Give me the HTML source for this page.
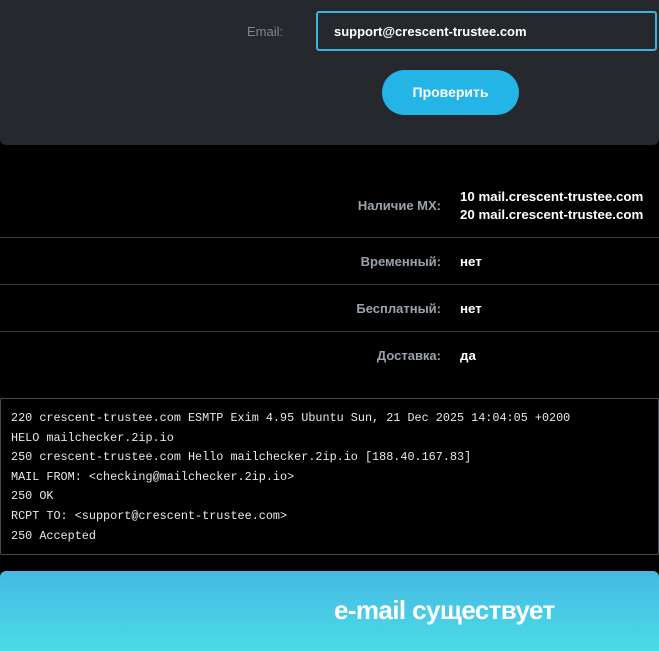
<!DOCTYPE html>
<html><head><meta charset="utf-8"><style>
*{margin:0;padding:0;box-sizing:border-box}
body{width:659px;height:646px;background:#000;font-family:"Liberation Sans","DejaVu Sans",sans-serif;position:relative;overflow:hidden;color:#fff}
.top{position:absolute;left:0;top:0;width:659px;height:145px;background:#25282d;border-radius:0 0 6px 6px}
.lbl{position:absolute;left:247px;top:24px;font-size:13px;color:#7d8794}
.inp{position:absolute;left:316px;top:11px;width:341px;height:40px;border:2px solid #3fb0df;border-radius:3px;background:#25282d;font-size:13px;font-weight:bold;padding:11px 0 0 16px}
.btn{position:absolute;left:382px;top:70px;width:137px;height:45px;border-radius:23px;background:#25b4e6;font-size:14px;font-weight:bold;text-align:center;line-height:45px}
.row{position:absolute;left:0;width:659px;border-bottom:1px solid #3a3d42}
.k{position:absolute;right:218px;font-size:13px;font-weight:bold;color:#9aa3ad}
.v{position:absolute;left:460px;font-size:13.3px;font-weight:bold}
.log{position:absolute;left:0;top:398px;width:659px;height:157px;border:1px solid #4a4d52;border-radius:2px;padding:10px 0 0 10px;font-family:"Liberation Mono","DejaVu Sans Mono",monospace;font-size:11.8px;line-height:19.6px;color:#e8e8e8}
.ok{position:absolute;left:0;top:571px;width:659px;height:80px;border-radius:6px 6px 0 0;background:linear-gradient(#46b9e4,#4adbe6);font-size:26px;font-weight:bold;padding:24px 0 0 334px;letter-spacing:-0.6px}
</style></head><body>
<div class="top">
<div class="lbl">Email:</div>
<div class="inp">support@crescent-trustee.com</div>
<div class="btn">Проверить</div>
</div>
<div class="row" style="top:145px;height:93px"><div class="k" style="top:53px">Наличие MX:</div><div class="v" style="top:43px;line-height:18px">10 mail.crescent-trustee.com<br>20 mail.crescent-trustee.com</div></div>
<div class="row" style="top:238px;height:47px"><div class="k" style="top:16px">Временный:</div><div class="v" style="top:16px">нет</div></div>
<div class="row" style="top:285px;height:47px"><div class="k" style="top:16px">Бесплатный:</div><div class="v" style="top:16px">нет</div></div>
<div style="position:absolute;top:332px;left:0;width:659px;height:47px"><div class="k" style="top:16px">Доставка:</div><div class="v" style="top:16px">да</div></div>
<div class="log">220 crescent-trustee.com ESMTP Exim 4.95 Ubuntu Sun, 21 Dec 2025 14:04:05 +0200<br>HELO mailchecker.2ip.io<br>250 crescent-trustee.com Hello mailchecker.2ip.io [188.40.167.83]<br>MAIL FROM: &lt;checking@mailchecker.2ip.io&gt;<br>250 OK<br>RCPT TO: &lt;support@crescent-trustee.com&gt;<br>250 Accepted</div>
<div class="ok">e-mail существует</div>
</body></html>
